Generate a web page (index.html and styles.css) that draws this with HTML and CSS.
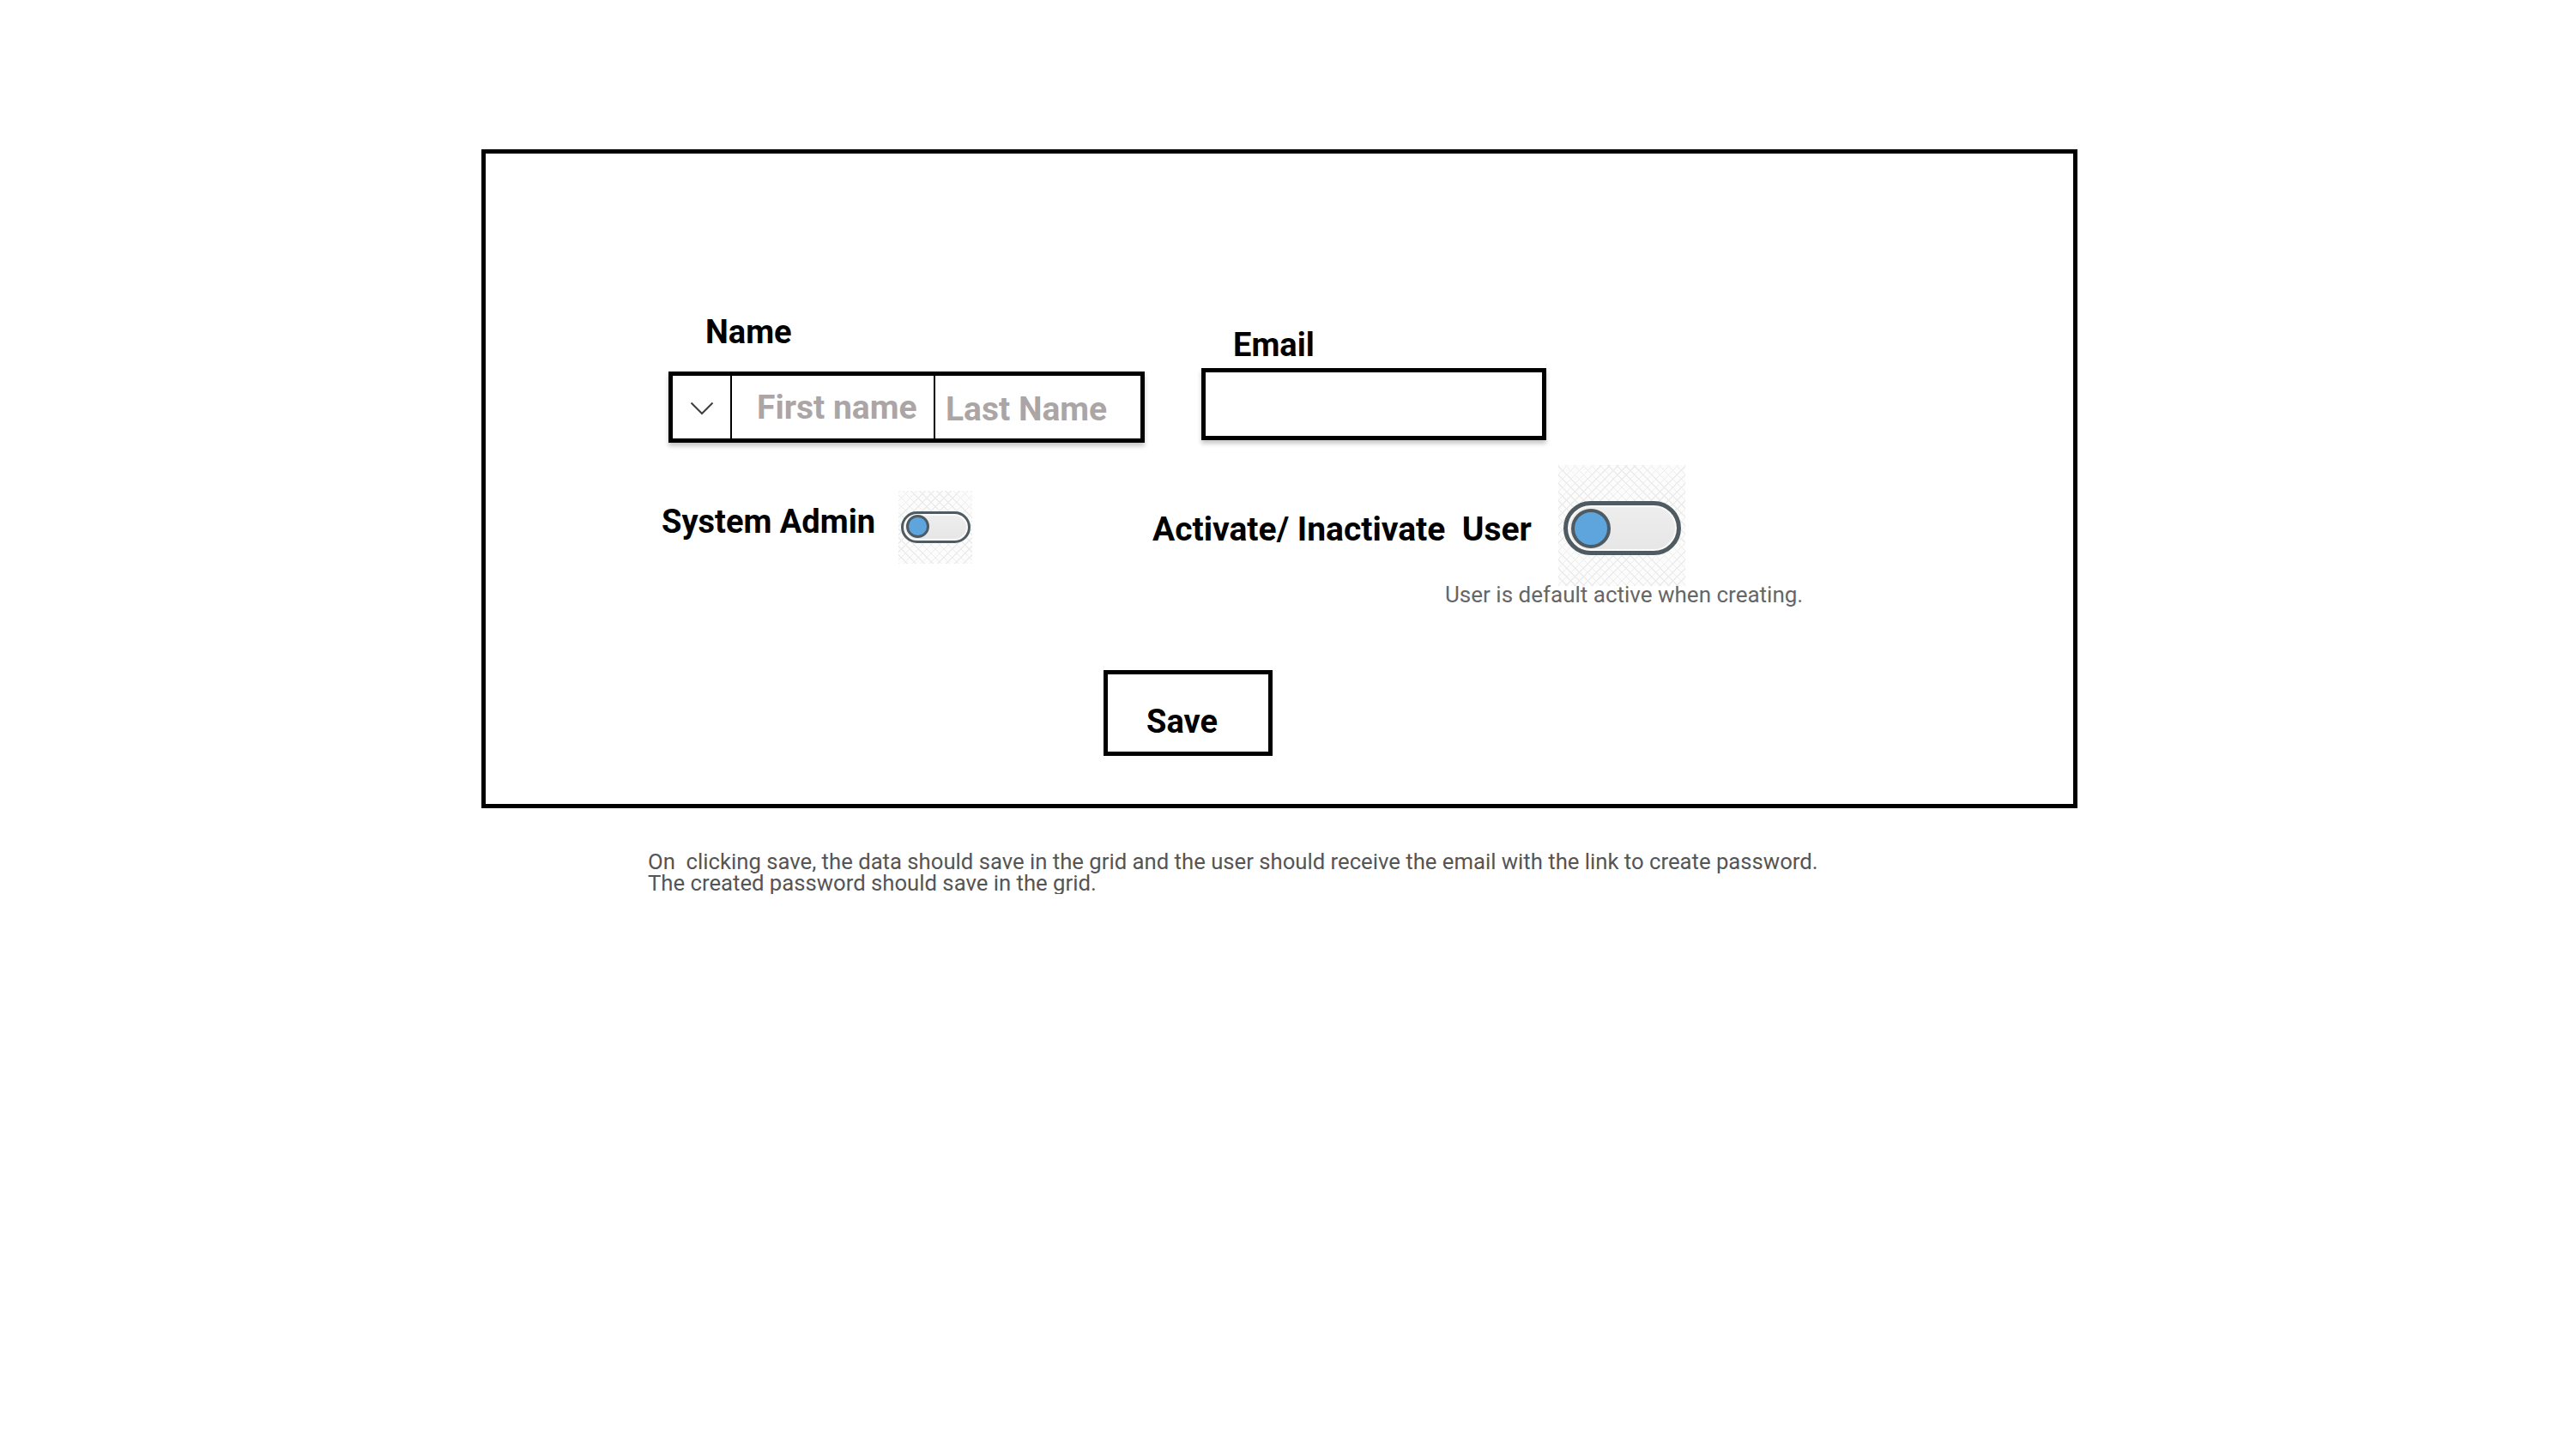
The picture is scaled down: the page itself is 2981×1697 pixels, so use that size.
FILE: index.html
```html
<!DOCTYPE html>
<html lang="en">
<head>
<meta charset="utf-8">
<title>Add User</title>
<link rel="stylesheet" href="styles.css">
</head>
<body>
<div class="page">
  <div class="frame">
    <div class="fields">
      <div class="field name-field">
        <div class="label name-label">Name</div>
        <div class="name-input">
          <div class="cell chev">
            <svg width="28" height="16" viewBox="0 0 28 16"><polyline points="1.5,1.5 14,14 26.5,1.5" fill="none" stroke="#3f3f3f" stroke-width="2"/></svg>
          </div>
          <div class="cell first">First name</div>
          <div class="cell last">Last Name</div>
        </div>
      </div>
      <div class="field email-field">
        <div class="label email-label">Email</div>
        <div class="email-input"></div>
      </div>
    </div>

    <div class="toggles">
      <div class="admin">
        <div class="label admin-label">System Admin</div>
        <div class="checker small-bg">
          <div class="pill small-pill"><div class="knob small-knob"></div></div>
        </div>
      </div>
      <div class="activate">
        <div class="activate-row">
          <div class="label activate-label">Activate/ Inactivate&nbsp; User</div>
          <div class="checker big-bg">
            <div class="pill big-pill"><div class="knob big-knob"></div></div>
          </div>
        </div>
        <div class="hint">User is default active when creating.</div>
      </div>
    </div>

    <div class="actions">
      <div class="save">Save</div>
    </div>
  </div>

  <div class="note">
    <div>On&nbsp; clicking save, the data should save in the grid and the user should receive the email with the link to create password.</div>
    <div>The created password should save in the grid.</div>
  </div>
</div>
</body>
</html>
```

FILE: styles.css
```css
html, body {
  margin: 0;
  padding: 0;
  background: #ffffff;
}

body {
  font-family: Roboto, "Liberation Sans", Arial, sans-serif;
  color: #000;
}

.page {
  padding: 174px 0 0 561px;
}

.frame {
  box-sizing: border-box;
  width: 1860px;
  height: 768px;
  border: 5px solid #000;
  padding-top: 186px;
}

.label {
  font-family: Roboto, "Liberation Sans", Arial, sans-serif;
  font-weight: 700;
  font-size: 38px;
  line-height: 44px;
  height: 44px;
  white-space: nowrap;
}

/* ---------- row 1 : text fields ---------- */
.fields {
  display: flex;
  align-items: flex-start;
  padding-left: 213px;
}

.name-field {
  width: 555px;
}

.name-label {
  padding-left: 43px;
}

.name-input {
  box-sizing: border-box;
  margin-top: 24px;
  height: 83px;
  border: 5px solid #000;
  display: flex;
  align-items: stretch;
  box-shadow: 0 4px 5px rgba(0, 0, 0, 0.22);
  background: #fff;
}

.cell {
  display: flex;
  align-items: center;
  box-sizing: border-box;
  font-family: Roboto, "Liberation Sans", Arial, sans-serif;
  font-weight: 700;
  font-size: 39px;
  color: #aba5a6;
  white-space: nowrap;
}

.chev {
  width: 69px;
  justify-content: center;
  border-right: 2px solid #000;
  padding-top: 2px;
}

.first {
  width: 237px;
  padding-left: 29px;
  border-right: 2px solid #000;
}

.last {
  flex: 1;
  padding-left: 12px;
  padding-top: 4px;
}

.email-field {
  margin-left: 66px;
  margin-top: 15px;
}

.email-label {
  padding-left: 37px;
}

.email-input {
  box-sizing: border-box;
  margin-top: 5px;
  width: 402px;
  height: 84px;
  border: 5px solid #000;
  box-shadow: 0 4px 5px rgba(0, 0, 0, 0.22);
  background: #fff;
}

/* ---------- row 2 : toggles ---------- */
.toggles {
  display: flex;
  align-items: flex-start;
  margin-top: 26px;
  padding-left: 205px;
}

.admin {
  width: 572px;
  display: flex;
  align-items: flex-start;
  margin-top: 30px;
}

.admin-label {
  margin-top: 14px;
  width: 276px;
}

.checker {
  box-sizing: border-box;
  background-color: #fcfcfc;
  background-image:
    repeating-linear-gradient(45deg, #ececec 0 1px, transparent 1px 7px),
    repeating-linear-gradient(-45deg, #ececec 0 1px, transparent 1px 7px);
}

.small-bg {
  width: 86px;
  height: 85px;
  padding: 24px 0 0 3px;
}

.pill {
  box-sizing: border-box;
  border-style: solid;
  border-color: #4f5a61;
  background: linear-gradient(#eeeeee, #e6e6e6);
  box-shadow: inset 0 0 0 2px #fafafa;
}

.small-pill {
  width: 81px;
  height: 37px;
  border-width: 3px;
  border-radius: 19px;
  padding: 2px 0 0 3px;
}

.knob {
  box-sizing: border-box;
  border-radius: 50%;
  border-style: solid;
  border-color: #4f5a61;
  background: #5ea5de;
}

.small-knob {
  width: 27px;
  height: 27px;
  border-width: 3px;
  margin-top: -1px;
}

.activate {
  display: flex;
  flex-direction: column;
}

.activate-row {
  display: flex;
  align-items: flex-start;
}

.activate-label {
  width: 473px;
  font-size: 39px;
  margin-top: 53px;
}

.big-bg {
  width: 148px;
  height: 141px;
  padding: 42px 0 0 6px;
}

.big-pill {
  width: 137px;
  height: 63px;
  border-width: 5px;
  border-radius: 32px;
  padding: 4px 0 0 4px;
}

.big-knob {
  width: 46px;
  height: 46px;
  border-width: 4px;
}

.hint {
  margin-top: -6px;
  margin-left: 341px;
  font-family: Roboto, "Liberation Sans", Arial, sans-serif;
  font-size: 26px;
  line-height: 32px;
  color: #666666;
  white-space: nowrap;
}

/* ---------- row 3 : save ---------- */
.actions {
  margin-top: 72px;
  padding-left: 720px;
}

.save {
  box-sizing: border-box;
  width: 197px;
  height: 100px;
  border: 5px solid #000;
  padding: 33px 0 0 45px;
  font-family: Roboto, "Liberation Sans", Arial, sans-serif;
  font-weight: 700;
  font-size: 38px;
  line-height: 44px;
}

/* ---------- footnote ---------- */
.note {
  margin-top: 50px;
  padding-left: 194px;
  font-family: Roboto, "Liberation Sans", Arial, sans-serif;
  font-size: 25.7px;
  line-height: 25px;
  color: #555555;
}
```
